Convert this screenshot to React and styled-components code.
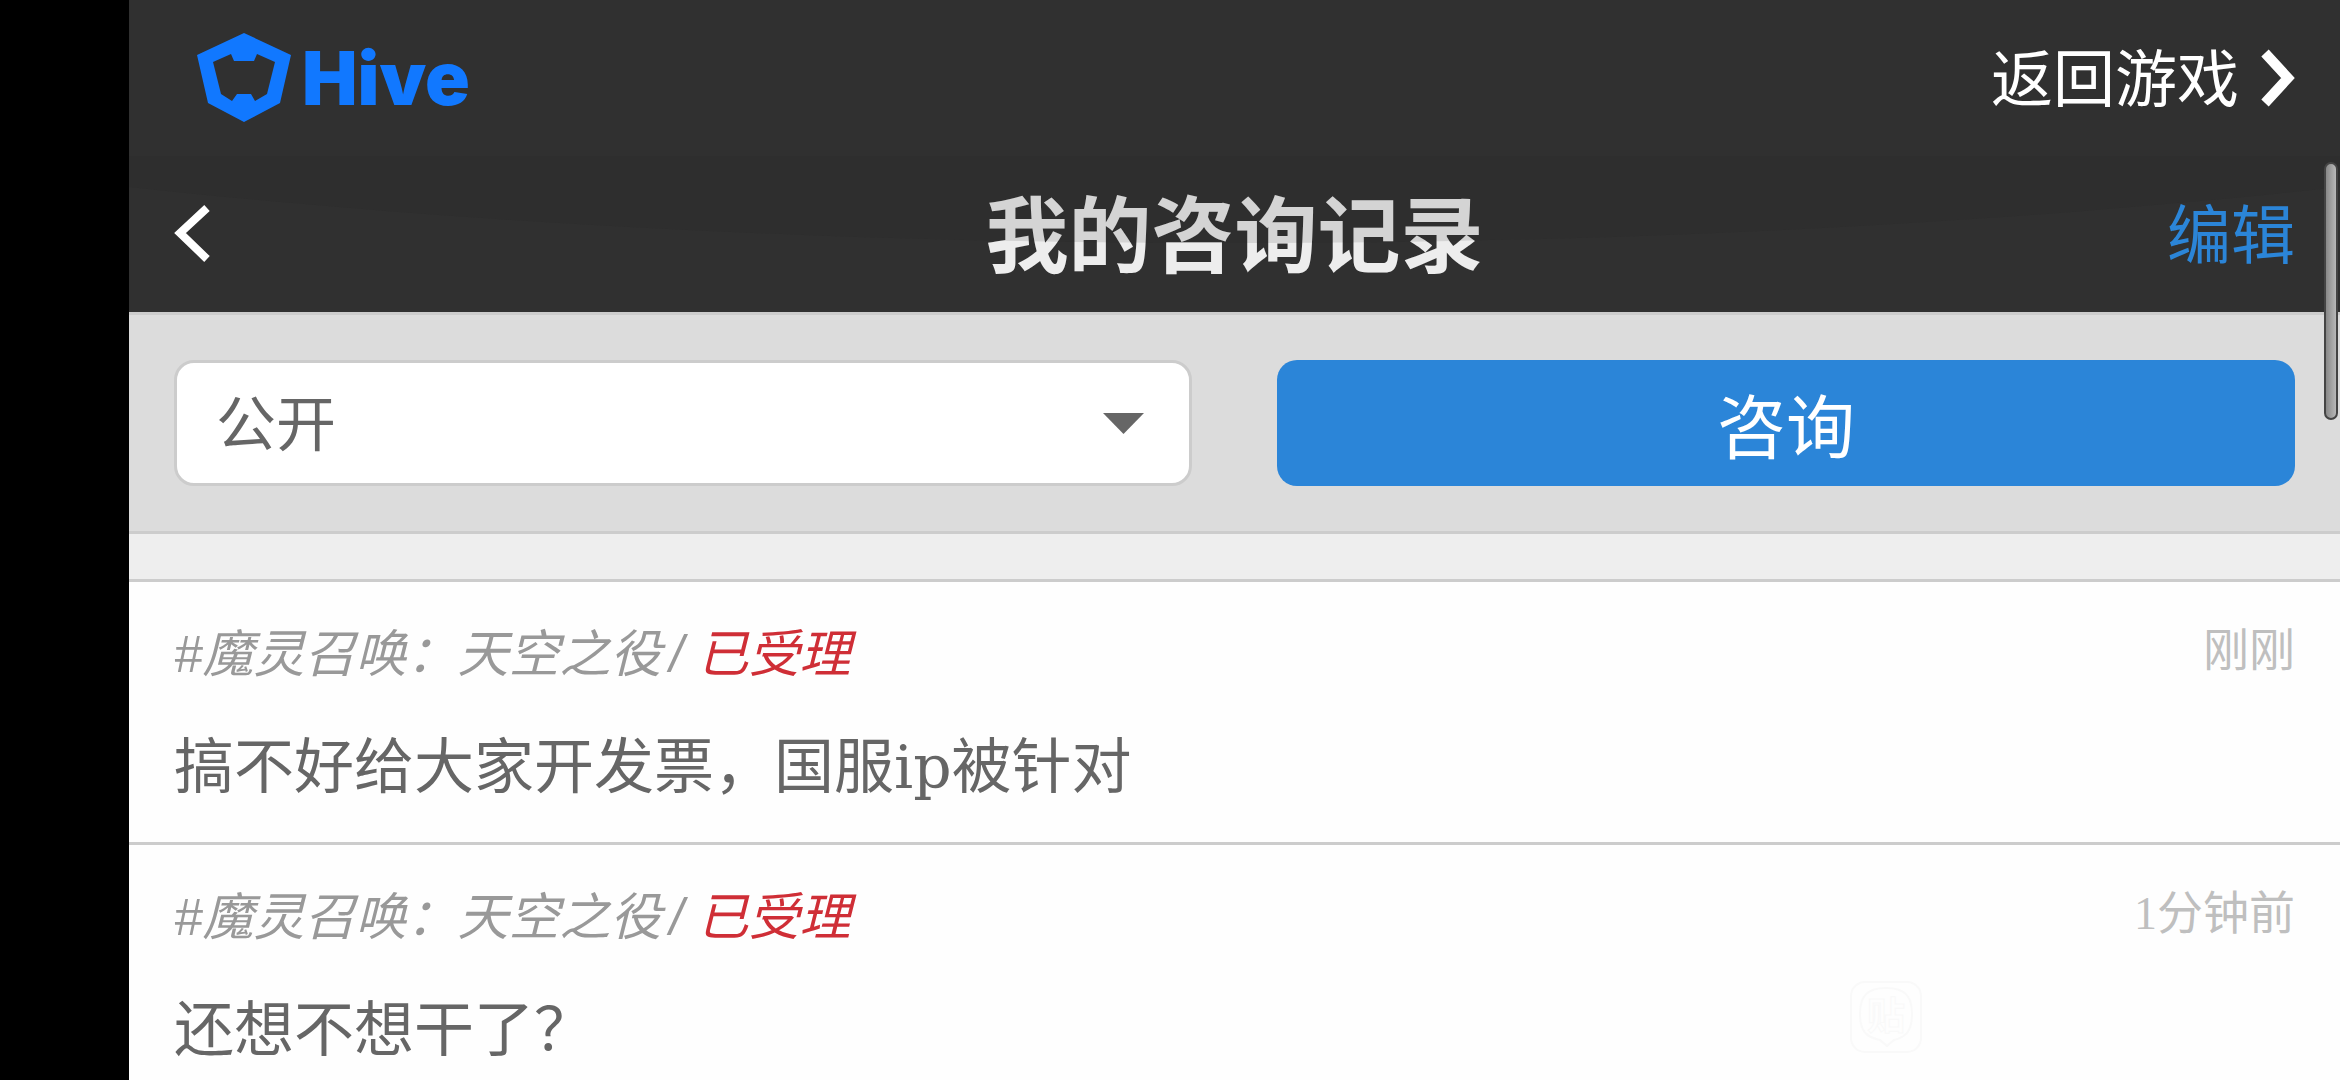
import React from "react";
import styled, { createGlobalStyle } from "styled-components";

const GlobalStyle = createGlobalStyle`
  * {
    box-sizing: border-box;
  }
  body {
    margin: 0;
    background: #000;
    font-family: "Noto Sans", "Noto Sans CJK SC", sans-serif;
  }
  button, select {
    font-family: inherit;
  }
`;

const Screen = styled.div`
  display: grid;
  grid-template-columns: 129px minmax(0, 1fr);
  height: 100vh;
  overflow: hidden;
`;

const Cutout = styled.div`
  background: #000;
`;

const Page = styled.div`
  position: relative;
  background: #eee;
  overflow: hidden;
`;

const Bar = styled.header`
  display: flex;
  align-items: center;
  justify-content: space-between;
  height: 156px;
  padding: 0 45px;
  background: #303030;
`;

const Brand = styled.a`
  display: flex;
  align-items: center;
  gap: 10px;
  padding-left: 22px;
  color: #1178ff;
  font-family: Inter, sans-serif;
  font-size: 74px;
  font-weight: 900;
  line-height: 88px;
  text-decoration: none;
`;

const ReturnLink = styled.a`
  display: flex;
  align-items: center;
  gap: 22px;
  color: #fff;
  font-size: 62px;
  line-height: 88px;
  text-decoration: none;
`;

const TitleBar = styled.div`
  position: relative;
  display: grid;
  grid-template-columns: 1fr auto 1fr;
  align-items: center;
  height: 156px;
  padding: 0 45px;
  background: #303030;
  overflow: hidden;

  /* glossy curve over the upper half */
  &::after {
    content: "";
    position: absolute;
    left: -50%;
    bottom: 69px;
    width: 200%;
    height: 836px;
    border-radius: 50%;
    background: rgba(32, 32, 32, 0.12);
    pointer-events: none;
  }
`;

const Title = styled.h1`
  margin: 0;
  color: #ededed;
  font-size: 83px;
  font-weight: 700;
  line-height: 120px;
`;

const IconButton = styled.button`
  display: flex;
  justify-self: start;
  padding: 0;
  border: 0;
  background: none;
`;

const EditButton = styled.button`
  justify-self: end;
  padding: 0;
  border: 0;
  background: none;
  color: #2b85d8;
  font-size: 64px;
  line-height: 88px;
`;

const Filters = styled.div`
  display: grid;
  grid-template-columns: 1fr 1fr;
  gap: 85px;
  padding: 45px;
  border: solid #ccc;
  border-width: 3px 0;
  background: #dcdcdc;
`;

const SelectWrap = styled.div`
  position: relative;
  height: 126px;

  svg {
    position: absolute;
    top: 53px;
    right: 48px;
    pointer-events: none;
  }
`;

const Select = styled.select`
  appearance: none;
  width: 100%;
  height: 100%;
  padding: 0 39px;
  border: 3px solid #ccc;
  border-radius: 20px;
  background: #fff;
  color: #666;
  font-size: 60px;
`;

const AskButton = styled.button`
  height: 126px;
  padding: 0;
  border: 0;
  border-radius: 20px;
  background: #2b85d8;
  color: #fff;
  font-size: 69px;
`;

const List = styled.ul`
  margin: 45px 0 0;
  padding: 0;
  border-top: 3px solid #ccc;
  background: #fefefe;
  list-style: none;
`;

const Item = styled.li`
  padding: 35px 45px 31px;
  border-bottom: 3px solid #ccc;
`;

const Meta = styled.div`
  display: flex;
  align-items: flex-start;
  justify-content: space-between;
`;

const Tag = styled.em`
  color: #999;
  font-family: "Liberation Sans", "Noto Sans CJK SC", sans-serif;
  font-size: 51px;
  line-height: 76px;
`;

const Slash = styled.span`
  padding: 0 14px 0 8px;
`;

const Status = styled.span`
  color: #cf2e36;
`;

const Time = styled.time`
  color: #bfbfbf;
  font-family: "Liberation Serif", "Noto Sans CJK SC", serif;
  font-size: 46px;
  line-height: 68px;
`;

const Message = styled.p`
  margin: 30px 0 0;
  color: #666;
  font-family: "DejaVu Serif", "Noto Sans CJK SC", serif;
  font-size: 60px;
  line-height: 88px;
`;

const ScrollThumb = styled.div`
  position: absolute;
  top: 162px;
  right: 2px;
  width: 14px;
  height: 258px;
  border: 2px solid #444;
  border-radius: 7px;
  background: linear-gradient(90deg, #888, #b8b8b8);
`;

const Watermark = styled.svg`
  position: absolute;
  right: 418px;
  bottom: 27px;
`;

const inquiries = [
  { id: 1, game: "魔灵召唤：天空之役", status: "已受理", time: "刚刚", text: "搞不好给大家开发票，国服ip被针对" },
  { id: 2, game: "魔灵召唤：天空之役", status: "已受理", time: "1分钟前", text: "还想不想干了？" },
];

function HiveMark() {
  return (
    <svg width="96" height="90" viewBox="0 0 96 90" aria-hidden="true">
      <path
        fill="#1178ff"
        fillRule="evenodd"
        d="M48 0 95 22 84 70 48 89 12 70 1 22ZM17 29 25 61 36 68 41 61H55L59 68 71 61 79 29 61 21 58 28H38L35 21Z"
      />
    </svg>
  );
}

export default function App() {
  return (
    <Screen>
      <GlobalStyle />
      <Cutout />
      <Page>
        <Bar>
          <Brand href="#">
            <HiveMark />
            <span>Hive</span>
          </Brand>
          <ReturnLink href="#">
            返回游戏
            <svg width="34" height="58" viewBox="0 0 34 58" aria-hidden="true">
              <path d="M4 4 27 29 4 54" fill="none" stroke="#fff" strokeWidth="10" />
            </svg>
          </ReturnLink>
        </Bar>
        <TitleBar>
          <IconButton aria-label="返回">
            <svg width="36" height="58" viewBox="0 0 36 58" aria-hidden="true">
              <path d="M33 3 6 28 33 54" fill="none" stroke="#fff" strokeWidth="8" />
            </svg>
          </IconButton>
          <Title>我的咨询记录</Title>
          <EditButton>编辑</EditButton>
        </TitleBar>
        <Filters>
          <SelectWrap>
            <Select aria-label="公开" defaultValue="public">
              <option value="public">公开</option>
            </Select>
            <svg width="41" height="21" viewBox="0 0 41 21" aria-hidden="true">
              <path d="M0 0H41L20.500 21Z" fill="#666" />
            </svg>
          </SelectWrap>
          <AskButton>咨询</AskButton>
        </Filters>
        <List>
          {inquiries.map((item) => (
            <Item key={item.id}>
              <Meta>
                <Tag>
                  #{item.game}
                  <Slash>/</Slash>
                  <Status>{item.status}</Status>
                </Tag>
                <Time>{item.time}</Time>
              </Meta>
              <Message>{item.text}</Message>
            </Item>
          ))}
        </List>
        <ScrollThumb />
        <Watermark width="72" height="72" viewBox="0 0 72 72" aria-hidden="true">
          <g fill="none" stroke="#f9f9f9" strokeWidth="2">
            <rect x="1" y="1" width="70" height="70" rx="14" />
            <path d="M36 7C54 7 62 14 62 33 62 50 56 56 44 59L37 65 30 59C16 56 10 50 10 33 10 14 18 7 36 7Z" />
          </g>
          <text x="36" y="48" textAnchor="middle" fontSize="38" fontWeight="700" fill="#fefefe" stroke="#f9f9f9">
            贴
          </text>
        </Watermark>
      </Page>
    </Screen>
  );
}
